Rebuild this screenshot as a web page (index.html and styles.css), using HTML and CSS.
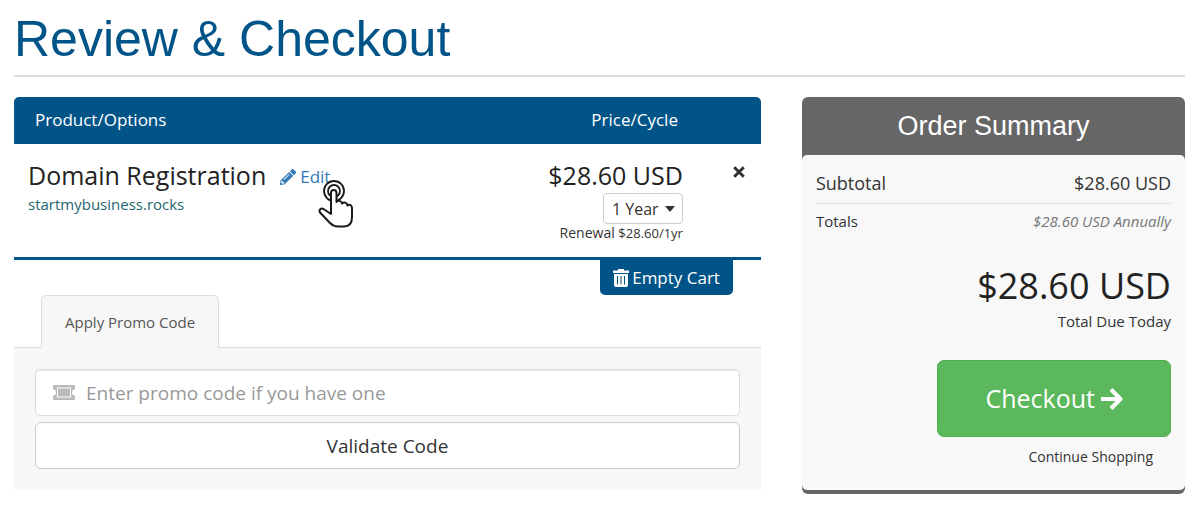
FILE: index.html
```html
<!DOCTYPE html>
<html lang="en">
<head>
  <meta charset="UTF-8">
  <title>Review &amp; Checkout</title>
  <link rel="stylesheet" href="styles.css">
</head>
<body>
  <h1>Review &amp; Checkout</h1>

  <div class="checkout">
    <!-- cart -->
    <main class="cart">
      <table class="cart-items">
        <thead>
          <tr>
            <th class="col-product">Product/Options</th>
            <th class="col-price">Price/Cycle</th>
            <th class="col-remove"></th>
          </tr>
        </thead>
        <tbody>
          <tr>
            <td class="col-product">
              <div class="item-title">
                <span class="item-name">Domain Registration</span>
                <a href="#" class="item-edit">
                  <svg class="icon-pencil" viewBox="0 0 512 512"><path fill="currentColor" d="M498 142l-47 47c-5 5-12 5-17 0L323 78c-5-5-5-12 0-17l47-47c19-19 49-19 68 0l60 60c19 19 19 49 0 68zM284 100L22 362 0 484c-3 16 11 31 28 28l122-22 262-262c5-5 5-12 0-17L301 100c-5-5-12-5-17 0zM124 340c-5-6-5-14 0-20l154-154c6-5 14-5 20 0s5 14 0 20L144 340c-6 5-14 5-20 0zM88 424h48v36l-64 12-32-32 12-64h36z"/></svg>Edit
                  <svg class="pointer" viewBox="0 0 36 50">
                    <g fill="none" stroke="#1a1a1a" stroke-width="2" stroke-linecap="round" stroke-linejoin="round">
                      <circle cx="16" cy="12" r="10" stroke-width="1.8"/>
                      <circle cx="16" cy="12" r="6" fill="#fff" stroke-width="1.8"/>
                      <path fill="#fff" d="M13 35V14C13 10 18.500 10 18.500 14V23C20 21 23.500 21.500 24 24.500C26 22.500 29 23.500 29.500 26.500C31.500 25 34 26 34 29V38C34 44 31 47.500 26 47.500H20C16 47.500 14 46 12 44L2 33.500C0.500 31 3 28.500 5.500 30Z"/>
                    </g>
                  </svg>
                </a>
              </div>
              <div class="item-domain">startmybusiness.rocks</div>
            </td>
            <td class="col-price">
              <div class="item-price">$28.60 USD</div>
              <div class="cycle">
                <select aria-label="Billing cycle">
                  <option>1 Year</option>
                </select>
                <svg class="caret" viewBox="0 0 10 6"><path fill="#333" d="M0 0h10L5 6z"/></svg>
              </div>
              <div class="item-renewal">Renewal <small>$28.60/1yr</small></div>
            </td>
            <td class="col-remove">
              <button type="button" class="remove" aria-label="Remove">
                <svg viewBox="0 0 12 12"><path fill="none" stroke="#333" stroke-width="3" d="M1.200 1.200l9.600 9.600M10.800 1.200L1.200 10.800"/></svg>
              </button>
            </td>
          </tr>
        </tbody>
      </table>

      <div class="empty-cart">
        <button type="button">
          <svg class="icon-trash" viewBox="0 0 16 18"><path fill="currentColor" fill-rule="evenodd" d="M5 0h6v1.500h5V4H0V1.500h5zM1 5h14v11a2 2 0 0 1-2 2H3a2 2 0 0 1-2-2zM4 7v8.500h1V7zM7.500 7v8.500h1V7zM11 7v8.500h1V7z"/></svg>
          Empty Cart
        </button>
      </div>

      <!-- promo code -->
      <div class="tabs">
        <a href="#promo" class="tab">Apply Promo Code</a>
      </div>
      <form class="promo" id="promo">
        <label class="promo-field">
          <svg class="icon-ticket" viewBox="0 0 22 15"><path fill="currentColor" fill-rule="evenodd" d="M1 0h20a1 1 0 0 1 1 1v3.500a3 3 0 0 0 0 6V14a1 1 0 0 1-1 1H1a1 1 0 0 1-1-1v-3.500a3 3 0 0 0 0-6V1a1 1 0 0 1 1-1zM4 2.500v10h14v-10zM5 3.500h12v8H5z"/></svg>
          <input type="text" placeholder="Enter promo code if you have one" aria-label="Promo code">
        </label>
        <button type="button" class="validate">Validate Code</button>
      </form>
    </main>

    <!-- order summary -->
    <aside class="summary">
      <h2>Order Summary</h2>
      <div class="summary-body">
        <div class="subtotal">
          <span>Subtotal</span>
          <span>$28.60 USD</span>
        </div>
        <div class="totals">
          <span>Totals</span>
          <em>$28.60 USD Annually</em>
        </div>
        <div class="due">$28.60 USD</div>
        <div class="due-label">Total Due Today</div>
        <button type="button" class="checkout-btn">
          Checkout
          <svg class="icon-arrow" viewBox="0 0 22 22"><path fill="none" stroke="currentColor" stroke-width="4" stroke-linejoin="round" d="M0 11h19M10 1.500L19.500 11L10 20.500"/></svg>
        </button>
        <a href="#" class="continue">Continue Shopping</a>
      </div>
    </aside>
  </div>
</body>
</html>
```
FILE: styles.css
```css
* {
  box-sizing: border-box;
}
body {
  margin: 0;
  padding: 0 15px 0 14px;
  background: #fff;
  color: #333;
  font-family: "Open Sans", sans-serif;
  font-size: 15px;
  line-height: 24px;
}
h1 {
  margin: 0 0 20px;
  padding: 6px 0 2px;
  border-bottom: 2px solid #ddd;
  color: #005487;
  font-family: "Liberation Sans", Arial, sans-serif;
  font-size: 50px;
  font-weight: normal;
  line-height: 67px;
}
a {
  text-decoration: none;
}
button, input, select {
  font-family: inherit;
  color: inherit;
}
button {
  cursor: pointer;
}
svg {
  display: block;
  flex: none;
}
.checkout {
  display: grid;
  grid-template-columns: 39fr 20fr;
  column-gap: 41px;
  align-items: start;
}

/* cart */
.cart-items {
  width: 100%;
  table-layout: fixed;
  border-collapse: separate;
  border-spacing: 0;
}
th {
  height: 47px;
  padding: 0 0 2px;
  background: #005487;
  color: #fff;
  font-size: 17px;
  font-weight: normal;
  text-align: left;
}
th:first-child {
  border-top-left-radius: 5px;
}
th:last-child {
  border-top-right-radius: 5px;
}
th.col-product {
  padding-left: 21px;
}
th.col-price {
  padding-right: 5px;
}
td {
  height: 116px;
  padding: 15px 0 0;
  border-bottom: 3px solid #005487;
  vertical-align: top;
}
td.col-product {
  padding-left: 14px;
}
.col-price {
  width: 180px;
  text-align: right;
}
.col-remove {
  width: 78px;
}
.item-title {
  display: flex;
  align-items: flex-end;
  gap: 14px;
  line-height: 28px;
}
.item-name, .item-price {
  color: #222;
  font-size: 25px;
  line-height: 32px;
}
.item-edit {
  position: relative;
  display: flex;
  align-items: center;
  gap: 4px;
  color: #337ab7;
  font-size: 17px;
}
.icon-pencil {
  width: 16px;
  height: 16px;
}
/* tap pointer over the edit link */
.pointer {
  position: absolute;
  top: 16px;
  left: 38px;
  width: 36px;
  height: 50px;
}
.item-domain {
  color: #1f6670;
  line-height: 26px;
}
.cycle {
  display: inline-grid;
  grid-template-columns: 1fr;
  align-items: center;
  justify-items: end;
  margin-top: 2px;
  vertical-align: top;
}
.cycle select, .cycle .caret {
  grid-area: 1 / 1;
}
.cycle select {
  width: 80px;
  height: 31px;
  padding: 0 8px;
  border: 1px solid #ccc;
  border-radius: 4px;
  background: #fff;
  font-size: 16px;
  appearance: none;
}
.caret {
  width: 10px;
  height: 6px;
  margin-right: 8px;
  pointer-events: none;
}
.item-renewal {
  font-size: 14px;
  line-height: 18px;
}
.item-renewal small {
  font-size: 13px;
}
.remove {
  display: block;
  margin: 7px 16px 0 auto;
  padding: 0;
  border: 0;
  background: none;
}
.remove svg {
  width: 12px;
  height: 12px;
}
.empty-cart {
  display: flex;
  justify-content: flex-end;
  padding-right: 28px;
}
.empty-cart button {
  display: flex;
  align-items: center;
  gap: 3px;
  height: 35px;
  padding: 0 13px;
  border: 0;
  border-radius: 0 0 5px 5px;
  background: #005487;
  color: #fff;
  font-size: 17px;
}
.icon-trash {
  width: 16px;
  height: 18px;
}

/* promo code */
.tabs {
  display: flex;
  padding-left: 27px;
  border-bottom: 1px solid #ddd;
}
.tab {
  margin-bottom: -1px;
  padding: 14px 23px;
  border: 1px solid #ddd;
  border-bottom: 0;
  border-radius: 5px 5px 0 0;
  background: #f7f7f7;
  color: #555;
  line-height: 24px;
}
.promo {
  display: grid;
  gap: 6px;
  padding: 21px;
  background: #f7f7f7;
}
.promo-field {
  display: flex;
  align-items: center;
  gap: 11px;
  height: 47px;
  padding: 0 17px;
  border: 1px solid #ddd;
  border-radius: 5px;
  background: #fff;
  box-shadow: inset 0 1px 1px rgba(0, 0, 0, .075);
}
.icon-ticket {
  width: 22px;
  height: 15px;
  color: #bbb;
}
.promo-field input {
  flex: 1;
  min-width: 0;
  padding: 0;
  border: 0;
  outline: 0;
  background: none;
  font-size: 19px;
}
.promo-field input::placeholder {
  color: #999;
}
.validate {
  height: 47px;
  border: 1px solid #ccc;
  border-radius: 6px;
  background: #fff;
  font-size: 19px;
}

/* order summary */
.summary {
  border-bottom: 4px solid #666;
  border-radius: 6px;
  background: #666;
}
.summary h2 {
  margin: 0;
  color: #fff;
  font-family: "Liberation Sans", Arial, sans-serif;
  font-size: 27px;
  font-weight: normal;
  line-height: 58px;
  text-align: center;
}
.summary-body {
  display: flex;
  flex-direction: column;
  padding: 8px 14px 21px;
  border-radius: 5px;
  background: #f8f8f8;
}
.subtotal, .totals {
  display: flex;
  align-items: center;
  justify-content: space-between;
}
.subtotal {
  border-bottom: 1px solid #ddd;
  font-size: 18px;
  line-height: 40px;
}
.totals {
  line-height: 34px;
}
.totals em {
  color: #777;
}
.due {
  margin-top: 24px;
  color: #222;
  font-size: 36px;
  line-height: 48px;
  text-align: right;
}
.due-label {
  line-height: 22px;
  text-align: right;
}
.checkout-btn {
  display: flex;
  align-items: center;
  align-self: flex-end;
  gap: 6px;
  margin-top: 28px;
  padding: 0 47px;
  border: 1px solid #4cae4c;
  border-radius: 7px;
  background: #5cb85c;
  color: #fff;
  font-size: 25px;
  line-height: 75px;
}
.icon-arrow {
  width: 22px;
  height: 22px;
}
.continue {
  align-self: flex-end;
  margin: 8px 18px 0 0;
  color: #333;
  font-size: 14px;
}
```
